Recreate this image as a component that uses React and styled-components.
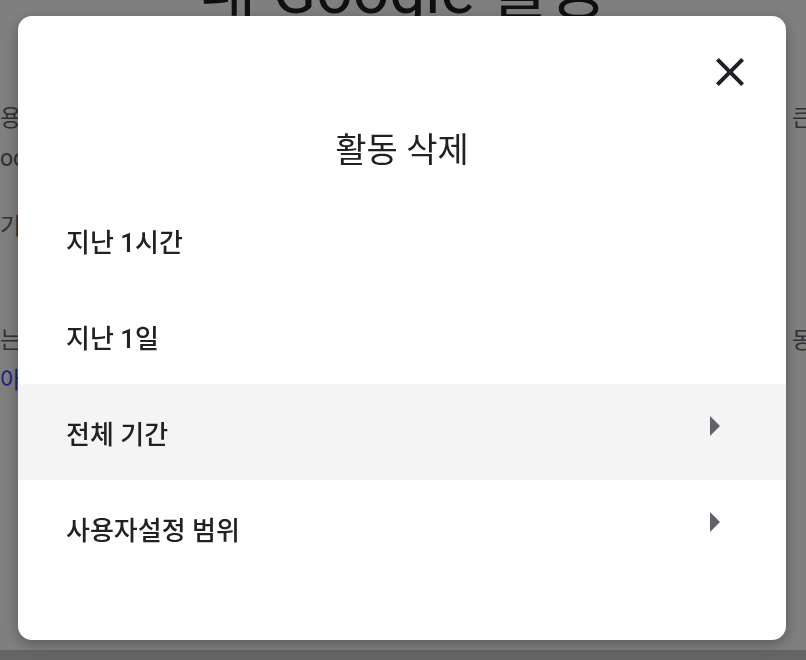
import React from "react";
import styled, { createGlobalStyle } from "styled-components";

const GlobalStyle = createGlobalStyle`
  html, body {
    margin: 0;
    padding: 0;
    background: #ffffff;
    overflow: hidden;
  }
  body {
    font-family: Roboto, "Noto Sans CJK KR", sans-serif;
  }
`;

// page that sits behind the modal
const Page = styled.div`
  width: 806px;
  height: 660px;
  overflow: hidden;
  background: #fff;
  display: flex;
  flex-direction: column;
  position: relative;
`;

const PageTitle = styled.h1`
  margin: -46px 0 0;
  font-size: 64px;
  line-height: 76px;
  font-weight: 400;
  text-align: center;
  color: #202124;
  font-family: Roboto, "Noto Sans CJK KR", sans-serif;
`;

const Paragraph = styled.div`
  display: flex;
  flex-direction: column;
  margin-top: ${(p) => p.$top}px;
`;

const BgLine = styled.div`
  display: flex;
  height: 40px;
  align-items: center;
  font-size: 23px;
  color: ${(p) => (p.$link ? "#3344ff" : "#5f6368")};
  white-space: nowrap;
`;

const BgLeft = styled.span`
  width: 792px;
  flex: none;
  overflow: hidden;
`;

const BgRight = styled.span`
  flex: none;
`;

const Footer = styled.div`
  margin-top: auto;
  height: 10px;
  background: #cbcbcb;
`;

const Overlay = styled.div`
  position: fixed;
  inset: 0;
  background: rgba(0, 0, 0, 0.5);
  display: flex;
  align-items: flex-start;
  justify-content: flex-start;
  padding: 16px 0 0 18px;
`;

const Dialog = styled.div`
  width: 768px;
  height: 624px;
  background: #fff;
  border-radius: 14px;
  box-shadow: 0 4px 14px rgba(0, 0, 0, 0.3);
  display: flex;
  flex-direction: column;
  overflow: hidden;
`;

const CloseRow = styled.div`
  display: flex;
  justify-content: flex-end;
  padding: 32px 32px 0;
`;

const CloseButton = styled.button`
  width: 48px;
  height: 48px;
  border: none;
  background: transparent;
  padding: 0;
  display: flex;
  align-items: center;
  justify-content: center;
  color: #202124;
  cursor: pointer;
`;

const Title = styled.h2`
  margin: 34px 0 22px;
  font-size: 34px;
  line-height: 40px;
  font-weight: 400;
  text-align: center;
  color: #202124;
`;

const List = styled.ul`
  list-style: none;
  margin: 0;
  padding: 0;
`;

const Item = styled.li`
  height: 96px;
  display: flex;
  align-items: center;
  justify-content: space-between;
  padding: 0 48px 0 48px;
  background: ${(p) => (p.$active ? "#f4f4f4" : "transparent")};
  font-size: 26px;
  font-weight: 500;
  color: #202124;
`;

const Arrow = styled.svg`
  width: 48px;
  height: 48px;
  color: #5f6368;
  margin-top: -12px;
`;

const CloseIcon = () => (
  <svg width="48" height="48" viewBox="0 0 24 24" fill="currentColor">
    <path d="M19 6.41 17.59 5 12 10.59 6.41 5 5 6.41 10.59 12 5 17.59 6.41 19 12 13.41 17.59 19 19 17.59 13.41 12z" />
  </svg>
);

const ArrowRight = () => (
  <Arrow viewBox="0 0 24 24" fill="currentColor">
    <path d="M10 17l5-5-5-5v10z" />
  </Arrow>
);

const options = [
  { label: "지난 1시간" },
  { label: "지난 1일" },
  { label: "전체 기간", more: true, active: true },
  { label: "사용자설정 범위", more: true },
];

export default function App() {
  return (
    <>
      <GlobalStyle />
      <Page>
        <PageTitle>내 Google 활동</PageTitle>
        <Paragraph $top={66}>
          <BgLine>
            <BgLeft>용자가 사용하는 Google 서비스에서 저장된 활동을 확인하고 관리하며</BgLeft>
            <BgRight>큰</BgRight>
          </BgLine>
          <BgLine>
            <BgLeft>oogle 계정에서 활동 기록을 삭제할 수 있습니다.</BgLeft>
          </BgLine>
        </Paragraph>
        <Paragraph $top={28}>
          <BgLine>
            <BgLeft>기록은 언제든지 삭제할 수 있습니다.</BgLeft>
          </BgLine>
        </Paragraph>
        <Paragraph $top={74}>
          <BgLine>
            <BgLeft>는 데이터를 관리하는 방법에 대해 자세히 알아보세요</BgLeft>
            <BgRight>동요</BgRight>
          </BgLine>
          <BgLine $link>
            <BgLeft>아보기</BgLeft>
          </BgLine>
        </Paragraph>
        <Footer />
      </Page>
      <Overlay>
        <Dialog role="dialog" aria-label="활동 삭제">
          <CloseRow>
            <CloseButton aria-label="닫기">
              <CloseIcon />
            </CloseButton>
          </CloseRow>
          <Title>활동 삭제</Title>
          <List>
            {options.map((o) => (
              <Item key={o.label} $active={o.active}>
                <span>{o.label}</span>
                {o.more && <ArrowRight />}
              </Item>
            ))}
          </List>
        </Dialog>
      </Overlay>
    </>
  );
}
